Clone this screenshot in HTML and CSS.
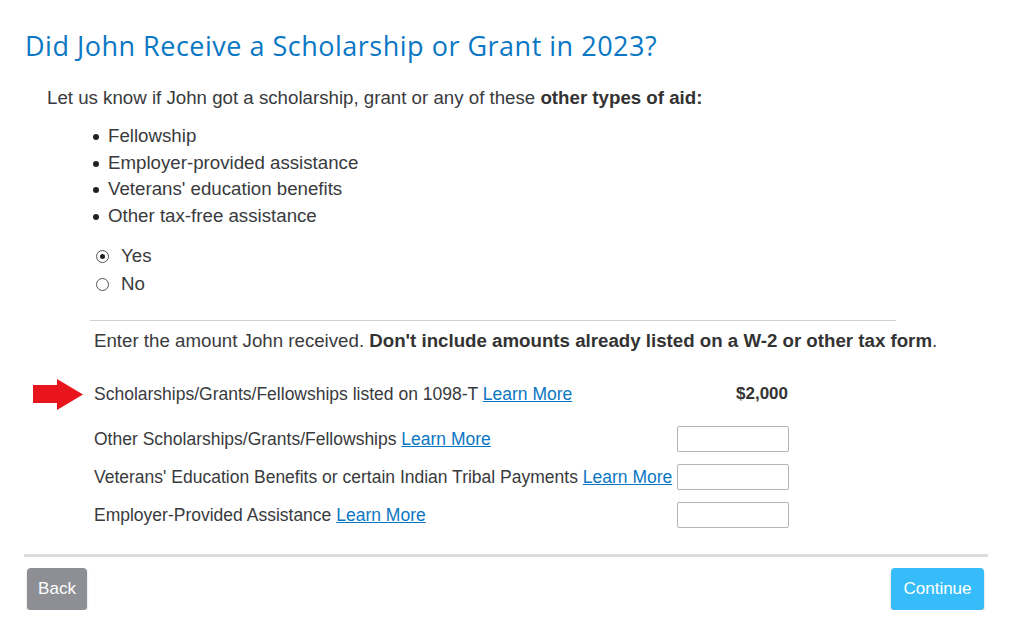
FILE: index.html
```html
<!DOCTYPE html>
<html>
<head>
<meta charset="utf-8">
<link rel="stylesheet" href="styles.css">
</head>
<body>
<div class="page">
  <h1 class="title">Did John Receive a Scholarship or Grant in 2023?</h1>
  <p class="intro">Let us know if John got a scholarship, grant or any of these <b>other types of aid:</b></p>
  <ul class="aid-list">
    <li>Fellowship</li>
    <li>Employer-provided assistance</li>
    <li>Veterans' education benefits</li>
    <li>Other tax-free assistance</li>
  </ul>
  <div class="radios">
    <label class="radio"><span class="dot checked"></span>Yes</label>
    <label class="radio"><span class="dot"></span>No</label>
  </div>
  <div class="amounts">
    <hr class="divider">
    <p class="enter">Enter the amount John received. <b>Don't include amounts already listed on a W-2 or other tax form</b>.</p>
    <div class="row row-first">
      <svg class="arrow" width="50" height="31" viewBox="0 0 50 31"><path d="M0 6 H24 V0 L50 15.5 L24 31 V24 H0 Z" fill="#e8161c"/></svg>
      <span class="label">Scholarships/Grants/Fellowships listed on 1098-T <a href="#">Learn More</a></span>
      <span class="value">$2,000</span>
    </div>
    <div class="row">
      <span class="label">Other Scholarships/Grants/Fellowships <a href="#">Learn More</a></span>
      <span class="field"></span>
    </div>
    <div class="row">
      <span class="label">Veterans' Education Benefits or certain Indian Tribal Payments <a href="#">Learn More</a></span>
      <span class="field"></span>
    </div>
    <div class="row">
      <span class="label">Employer-Provided Assistance <a href="#">Learn More</a></span>
      <span class="field"></span>
    </div>
  </div>
  <div class="footer">
    <button class="btn back">Back</button>
    <button class="btn continue">Continue</button>
  </div>
</div>
</body>
</html>
```
FILE: styles.css
```css
html, body { margin: 0; padding: 0; background: #fff; }
body { font-family: "Liberation Sans", Arial, sans-serif; color: #393a3d; }
.page { padding: 0 29px 0 24px; }
.title {
  font-family: "Open Sans", Lato, sans-serif;
  font-weight: 400;
  font-size: 27px;
  letter-spacing: 0.5px;
  color: #0a77c4;
  margin: 0;
  padding: 28px 0 0 1px;
  line-height: 35px;
}
.intro { font-size: 18.7px; margin: 23px 0 0 23px; line-height: 24px; }
.intro b { color: #333; }
.aid-list { list-style: none; margin: 13px 0 0 68px; padding: 0; }
.aid-list li { font-size: 18.7px; line-height: 26.5px; position: relative; padding-left: 16px; }
.aid-list li::before {
  content: ""; position: absolute; left: 1px; top: 11px; width: 6px; height: 6px; border-radius: 50%; background: #222;
}
.radios { margin: 13px 0 0 72px; display: flex; flex-direction: column; }
.radio { font-size: 18.7px; line-height: 28px; display: flex; align-items: center; }
.dot { border: 1px solid #555; border-radius: 50%; margin-right: 12px; box-sizing: border-box; display: inline-block; position: relative; background: #fff; width: 13px; height: 13px; }
.dot.checked::after { content: ""; position: absolute; left: 3px; top: 3px; width: 5px; height: 5px; border-radius: 50%; background: #222; }
.amounts { margin-left: 66px; width: 806px; }
.divider { border: 0; border-top: 1px solid #cfcfcf; margin: 22px 0 0 0; }
.enter { font-size: 18.7px; margin: 8px 0 0 4px; line-height: 24px; white-space: nowrap; }
.enter b { color: #333; }
.row { position: relative; display: grid; grid-template-columns: 583px 112px; align-items: center; margin-left: 4px; height: 38px; }
.row-first { margin-top: 22px; margin-bottom: 7px; }
.row .label { font-size: 17.5px; white-space: nowrap; }
.row a { color: #0a77c4; text-decoration: underline; }
.value { font-weight: bold; font-size: 17px; text-align: right; color: #333; padding-right: 1px; }
.field { height: 26px; border: 1px solid #b5b5b5; border-radius: 2px; box-sizing: border-box; }
.arrow { position: absolute; left: -61px; top: 4px; }
.footer { border-top: 3px solid #dcdcdc; margin-top: 20px; padding-top: 11px; display: flex; justify-content: space-between; padding-left: 3px; padding-right: 4px; }
.btn { border: 0; border-radius: 4px; height: 42px; font-family: "Liberation Sans", Arial, sans-serif; font-size: 17px; color: #fff; box-shadow: 0 2px 2px rgba(0,0,0,0.25); }
.back { background: #8d8f94; width: 60px; }
.continue { background: #36bdf9; width: 93px; }
```
